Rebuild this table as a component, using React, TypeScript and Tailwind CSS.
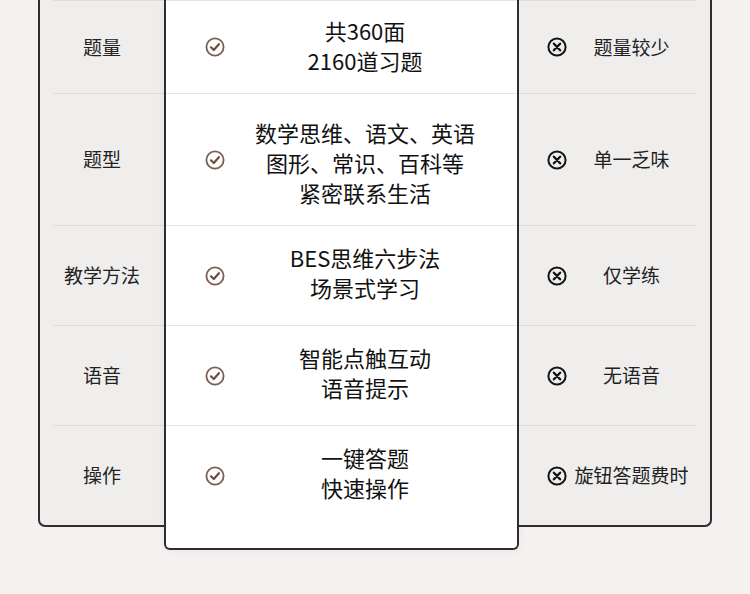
import React from "react";

const font = { fontFamily: '"Noto Sans CJK SC", "Noto Sans", sans-serif' };

function Check() {
  return (
    <svg width="20" height="20" viewBox="0 0 20 20" className="shrink-0">
      <circle cx="10" cy="10" r="8.6" fill="none" stroke="#7d5f50" strokeWidth="1.8" />
      <path d="M6 10.3 L8.8 13 L13.9 7.2" fill="none" stroke="#6a4d3f" strokeWidth="2.2" strokeLinecap="round" strokeLinejoin="round" />
    </svg>
  );
}

function Cross() {
  return (
    <svg width="20" height="20" viewBox="0 0 20 20" className="shrink-0">
      <circle cx="10" cy="10" r="8.6" fill="none" stroke="#141414" strokeWidth="2" />
      <path d="M6.9 6.7 L13.1 13.3 M13.1 6.7 L6.9 13.3" fill="none" stroke="#141414" strokeWidth="2.4" strokeLinecap="round" />
    </svg>
  );
}

const rows = [
  { label: "题量", mid: ["共360面", "2160道习题"], right: "题量较少", h: "h-[93px]", off: "-mt-[4px]" },
  { label: "题型", mid: ["数学思维、语文、英语", "图形、常识、百科等", "紧密联系生活"], right: "单一乏味", h: "h-[132px]", off: "mt-[4px]" },
  { label: "教学方法", mid: ["BES思维六步法", "场景式学习"], right: "仅学练", h: "h-[100px]", off: "-mt-[8px]" },
  { label: "语音", mid: ["智能点触互动", "语音提示"], right: "无语音", h: "h-[100px]", off: "-mt-[8px]" },
  { label: "操作", mid: ["一键答题", "快速操作"], right: "旋钮答题费时", h: "h-[100px]", off: "-mt-[8px]" },
];

export default function App() {
  return (
    <div className="w-[750px] h-[594px] overflow-hidden bg-[#f4f1f0]" style={font}>
      <div className="flex items-start pl-[38px]">
        {/* left column */}
        <div className="w-[126px] bg-[#efeeed] border-l-2 border-b-2 border-[#2e2e2e] rounded-bl-[7px]">
          {rows.map((r, i) => (
            <div key={i} className={`${r.h} ml-[13px] border-t border-[#e0dedc] flex items-center justify-center pr-[13px] text-[19px] text-[#222]`}>
              {r.label}
            </div>
          ))}
        </div>
        {/* middle panel */}
        <div className="w-[355px] bg-white border-x-2 border-b-2 border-[#2e2e2e] rounded-b-[6px] pb-[23px] shadow-[0_0_8px_rgba(0,0,0,0.06)]">
          {rows.map((r, i) => (
            <div key={i} className={`${r.h} border-t border-[#e6e4e2] flex items-center pl-[39px] pr-[12px]`}>
              <Check />
              <div className={`flex-1 text-center text-[22px] leading-[30px] text-[#111] ${r.off}`}>
                {r.mid.map((t, j) => (
                  <div key={j}>{t}</div>
                ))}
              </div>
            </div>
          ))}
        </div>
        {/* right column */}
        <div className="w-[193px] bg-[#efeeed] border-r-2 border-b-2 border-[#2e2e2e] rounded-br-[7px]">
          {rows.map((r, i) => (
            <div key={i} className={`${r.h} mr-[14px] border-t border-[#e0dedc] flex items-center pl-[28px]`}>
              <Cross />
              <div className="flex-1 text-center text-[19px] text-[#222]">{r.right}</div>
            </div>
          ))}
        </div>
      </div>
    </div>
  );
}
